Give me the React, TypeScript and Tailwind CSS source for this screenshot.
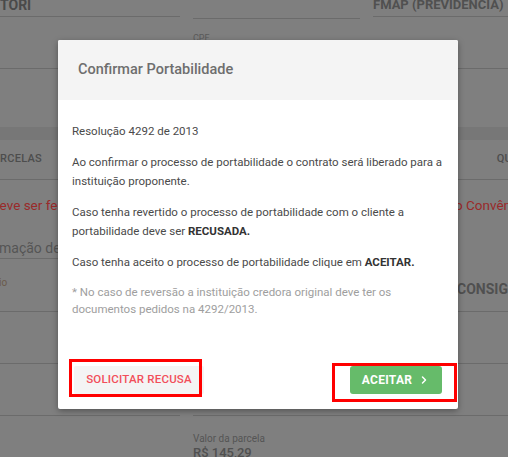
import React from 'react';
import { ChevronRight } from 'lucide-react';

const font = { fontFamily: 'Roboto, "Noto Sans", sans-serif' };

const Background: React.FC = () => (
  <div className="w-full h-[457px] overflow-hidden bg-[#7f7f7f] text-[#4a4a4a]">
    {/* top fields */}
    <div className="flex h-[69px] border-b border-[#6b6b6b]">
      <div className="w-[180px] flex flex-col">
        <div className="h-[19px] border-b border-[#6b6b6b] text-[14px] font-bold leading-[14px] -mt-[2px]">TORI</div>
      </div>
      <div className="flex-1 flex flex-col pl-[13px]">
        <div className="h-[19px] border-b border-[#6b6b6b] mr-[13px]" />
        <div className="text-[9px] text-[#5a5a5a] mt-[13px]">CPF</div>
      </div>
      <div className="w-[135px] flex flex-col">
        <div className="h-[19px] border-b border-[#6b6b6b] text-[13px] font-bold leading-[14px] -mt-[2px] text-[#505050] whitespace-nowrap">FMAP (PREVIDENCIA)</div>
      </div>
    </div>
    <div className="h-[58px]" />
    <div className="h-[13px] bg-[#777777]" />
    {/* table header */}
    <div className="flex justify-between items-center h-[40px] border-b border-[#6b6b6b] text-[11px] font-medium tracking-wide text-[#4d4d4d]">
      <span className="-ml-[14px]">PARCELAS</span>
      <span className="-mr-[4px]">QU</span>
    </div>
    <div className="flex justify-between items-center h-[46px] pt-[4px] text-[13.5px] text-[#9a2a2a] whitespace-nowrap">
      <span className="-ml-[8px]">deve ser feita</span>
      <span className="-mr-[14px]">o Convênio</span>
    </div>
    <div className="flex">
      <div className="w-[180px] flex flex-col">
        <div className="h-[33px] border-b border-[#6b6b6b] text-[14px] text-[#555] leading-[18px] pt-[13px] whitespace-nowrap -ml-[1px]">mação de Recebimento</div>
        <div className="h-[53px] border-b border-[#6b6b6b] text-[10px] text-[#6b5a4a] pt-[16px]"><span className="-ml-[1px]">io</span></div>
        <div className="h-[52px] border-b border-[#6b6b6b]" />
        <div className="h-[52px] border-b border-[#6b6b6b]" />
      </div>
      <div className="flex-1 flex flex-col pl-[13px]">
        <div className="h-[86px]" />
        <div className="h-[52px]" />
        <div className="h-[52px] border-b border-[#6b6b6b]" />
        <div className="text-[10px] text-[#555] mt-[15px]">Valor da parcela</div>
        <div className="text-[13px] font-medium text-[#505050] leading-[14px]">R$ 145,29</div>
      </div>
      <div className="w-[51px] flex flex-col">
        <div className="h-[86px] border-b border-[#6b6b6b] text-[14px] font-bold text-[#505050] pt-[56px] leading-[14px] whitespace-nowrap">CONSIGNADO</div>
        <div className="h-[52px] border-b border-[#6b6b6b]" />
        <div className="h-[52px] border-b border-[#6b6b6b]" />
      </div>
    </div>
  </div>
);

const App: React.FC = () => {
  return (
    <div className="relative w-[508px] h-[457px] overflow-hidden" style={font}>
      <Background />

      <div className="absolute left-[58px] top-[40px] w-[400px] bg-white rounded-[2px] shadow-[0_2px_6px_rgba(0,0,0,0.35)] overflow-hidden">
        <div className="h-[60px] bg-[#f4f4f4] flex items-center px-5">
          <h2 className="text-[14.5px] font-medium text-[#6e6e6e]">Confirmar Portabilidade</h2>
        </div>
        <div className="pl-[14px] pr-[8px] pt-[22px] text-[11.5px] leading-[19px] text-[#4a4a4a] flex flex-col gap-[12px]">
          <p>Resolução 4292 de 2013</p>
          <p>Ao confirmar o processo de portabilidade o contrato será liberado para a instituição proponente.</p>
          <p>
            Caso tenha revertido o processo de portabilidade com o cliente a portabilidade deve ser{' '}
            <b className="font-bold text-[#333]">RECUSADA.</b>
          </p>
          <p>
            Caso tenha aceito o processo de portabilidade clique em <b className="font-bold text-[#333]">ACEITAR.</b>
          </p>
          <p className="text-[#9e9e9e] leading-[17px] pr-[20px]">
            * No caso de reversão a instituição credora original deve ter os documentos pedidos na 4292/2013.
          </p>
        </div>
        <div className="flex justify-between items-center px-4 pt-[48px] pb-[15px]">
          <button className="h-[28px] w-[130px] bg-[#f4f4f4] rounded-[2px] text-[11.5px] font-medium tracking-[0.2px] text-[#f24e5a]">
            SOLICITAR RECUSA
          </button>
          <button className="h-[28px] w-[92px] bg-[#66bb6a] rounded-[3px] text-[12px] font-bold tracking-[0.3px] text-white flex items-center justify-center gap-[6px]">
            ACEITAR
            <ChevronRight size={12} strokeWidth={3} />
          </button>
        </div>
      </div>

      {/* annotation boxes */}
      <div className="absolute left-[69px] top-[359px] w-[133px] h-[38px] border-[3px] border-[#ff0000]" />
      <div className="absolute left-[332px] top-[363px] w-[125px] h-[39px] border-[3px] border-[#ff0000]" />
    </div>
  );
};

export default App;
